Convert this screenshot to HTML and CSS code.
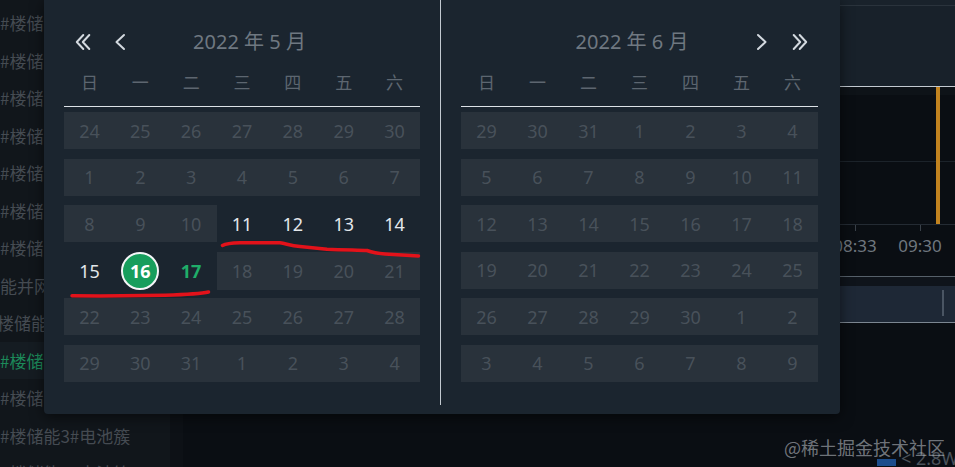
FILE: index.html
```html
<!DOCTYPE html>
<html lang="zh-CN">
<head>
<meta charset="utf-8">
<title>日期范围选择</title>
<link rel="stylesheet" href="styles.css">
</head>
<body>
<div class="app">
  <aside class="sidebar">
    <ul class="list">
      <li class="item">#楼储能1#电池簇</li>
      <li class="item">#楼储能1#PCS</li>
      <li class="item">#楼储能1#电表</li>
      <li class="item">#楼储能2#电池簇</li>
      <li class="item">#楼储能2#PCS</li>
      <li class="item">#楼储能2#电表</li>
      <li class="item">#楼储能并网柜</li>
      <li class="item">能并网柜</li>
      <li class="item shift">楼储能总表</li>
      <li class="item active">#楼储能3#PCS</li>
      <li class="item">#楼储能3#电表</li>
      <li class="item">#楼储能3#电池簇</li>
      <li class="item">#楼储能4#电池簇</li>
    </ul>
  </aside>
  <div class="gutter"></div>
  <main class="main">
    <div class="chart">
      <div class="chart-top"></div>
      <div class="chart-head"></div>
      <div class="plot">
        <div class="grid-line"></div>
        <div class="series"></div>
      </div>
      <div class="axis">
        <span class="tick">00:00</span>
        <span class="tick">00:57</span>
        <span class="tick">01:54</span>
        <span class="tick">02:51</span>
        <span class="tick">03:48</span>
        <span class="tick">04:45</span>
        <span class="tick">05:42</span>
        <span class="tick">06:39</span>
        <span class="tick">07:36</span>
        <span class="tick">08:33</span>
        <span class="tick">09:30</span>
        <span class="tick">10:27</span>
      </div>
      <div class="zoom">
        <div class="zoom-bar"><span class="handle"></span></div>
      </div>
    </div>
    <div class="legend"><span class="swatch"></span><span class="legend-text">&lt; 2.8W</span></div>
  </main>
</div>

<div class="picker">
  <section class="cal">
    <header class="cal-head">
      <div class="nav">
        <span class="nav-btn"><svg viewBox="0 0 24 24"><path d="M12.3 5 L5.8 12 L12.3 19 M18.3 5 L11.8 12 L18.3 19"/></svg></span>
        <span class="nav-btn"><svg viewBox="0 0 24 24"><path d="M16 5 L8.5 12 L16 19"/></svg></span>
      </div>
      <div class="title">2022 年 5 月</div>
      <div class="spacer"></div>
    </header>
    <div class="weekdays"><span>日</span><span>一</span><span>二</span><span>三</span><span>四</span><span>五</span><span>六</span></div>
    <div class="days">
      <div class="week"><span class="d off">24</span><span class="d off">25</span><span class="d off">26</span><span class="d off">27</span><span class="d off">28</span><span class="d off">29</span><span class="d off">30</span></div>
      <div class="week"><span class="d off">1</span><span class="d off">2</span><span class="d off">3</span><span class="d off">4</span><span class="d off">5</span><span class="d off">6</span><span class="d off">7</span></div>
      <div class="week"><span class="d off">8</span><span class="d off">9</span><span class="d off">10</span><span class="d">11</span><span class="d">12</span><span class="d">13</span><span class="d">14</span></div>
      <div class="week"><span class="d">15</span><span class="d"><span class="sel">16</span></span><span class="d today">17</span><span class="d off">18</span><span class="d off">19</span><span class="d off">20</span><span class="d off">21</span></div>
      <div class="week"><span class="d off">22</span><span class="d off">23</span><span class="d off">24</span><span class="d off">25</span><span class="d off">26</span><span class="d off">27</span><span class="d off">28</span></div>
      <div class="week"><span class="d off">29</span><span class="d off">30</span><span class="d off">31</span><span class="d off">1</span><span class="d off">2</span><span class="d off">3</span><span class="d off">4</span></div>
    </div>
  </section>
  <div class="divider"></div>
  <section class="cal cal-right">
    <header class="cal-head">
      <div class="spacer"></div>
      <div class="title">2022 年 6 月</div>
      <div class="nav nav-right">
        <span class="nav-btn"><svg viewBox="0 0 24 24"><path d="M8 5 L15.5 12 L8 19"/></svg></span>
        <span class="nav-btn"><svg viewBox="0 0 24 24"><path d="M5.7 5 L12.2 12 L5.7 19 M11.7 5 L18.2 12 L11.7 19"/></svg></span>
      </div>
    </header>
    <div class="weekdays"><span>日</span><span>一</span><span>二</span><span>三</span><span>四</span><span>五</span><span>六</span></div>
    <div class="days">
      <div class="week"><span class="d off">29</span><span class="d off">30</span><span class="d off">31</span><span class="d off">1</span><span class="d off">2</span><span class="d off">3</span><span class="d off">4</span></div>
      <div class="week"><span class="d off">5</span><span class="d off">6</span><span class="d off">7</span><span class="d off">8</span><span class="d off">9</span><span class="d off">10</span><span class="d off">11</span></div>
      <div class="week"><span class="d off">12</span><span class="d off">13</span><span class="d off">14</span><span class="d off">15</span><span class="d off">16</span><span class="d off">17</span><span class="d off">18</span></div>
      <div class="week"><span class="d off">19</span><span class="d off">20</span><span class="d off">21</span><span class="d off">22</span><span class="d off">23</span><span class="d off">24</span><span class="d off">25</span></div>
      <div class="week"><span class="d off">26</span><span class="d off">27</span><span class="d off">28</span><span class="d off">29</span><span class="d off">30</span><span class="d off">1</span><span class="d off">2</span></div>
      <div class="week"><span class="d off">3</span><span class="d off">4</span><span class="d off">5</span><span class="d off">6</span><span class="d off">7</span><span class="d off">8</span><span class="d off">9</span></div>
    </div>
  </section>
</div>

<svg class="marks" viewBox="0 0 955 467" width="955" height="467">
  <path d="M222.5 245.5 C226 243.5 232 243 240 242.8 L280 242.8 C286 243.5 290 245.8 300 246.6 L327 249.2 C345 250 360 250 367 250.5 C371 252 375 253.3 385 254 L418.5 256"/>
  <path d="M72 295.8 L100 296 L165 295.2 C185 294.6 200 294 208.5 292"/>
</svg>

<div class="watermark">@稀土掘金技术社区</div>
</body>
</html>
```

FILE: styles.css
```css
html, body {
  margin: 0;
  padding: 0;
}

body {
  width: 955px;
  height: 467px;
  overflow: hidden;
  position: relative;
  background: #0a0e13;
  font-family: "Noto Sans", "Noto Sans CJK SC", sans-serif;
}

.app {
  display: flex;
  height: 467px;
}

/* sidebar list */
.sidebar {
  width: 170px;
  flex: none;
  background: #11161b;
  overflow: hidden;
}

.list {
  list-style: none;
  margin: 0;
  padding: 4px 0 0;
}

.item {
  height: 37.5px;
  line-height: 37.5px;
  font-size: 17px;
  color: #454b52;
  white-space: nowrap;
  font-family: "Noto Sans CJK SC", sans-serif;
}

.item.shift {
  text-indent: -3px;
}

.item.active {
  background: #151c22;
  color: #1c8a5a;
}

.gutter {
  width: 13px;
  flex: none;
  background: #0d1116;
}

.main {
  flex: 1;
  min-width: 0;
  display: flex;
  flex-direction: column;
  overflow: hidden;
}

/* chart */
.chart-top {
  height: 5px;
  background: #19222b;
  border-bottom: 1px solid #2a333c;
}

.chart-head {
  height: 80px;
  background: #18212a;
  border-bottom: 1px solid #c3cad1;
}

.plot {
  height: 138px;
  box-sizing: border-box;
  padding-top: 74px;
  position: relative;
  border-bottom: 1px solid #242b33;
  background: #0a0e13;
}

.plot::before {
  content: "";
  display: block;
  position: absolute;
  left: 0;
  right: 0;
  top: 0;
  height: 8px;
  background: #0e1318;
}

.grid-line {
  height: 1px;
  background: #1c232a;
}

.series {
  position: absolute;
  left: 753px;
  top: 0;
  bottom: 0;
  width: 4px;
  background: #c2831f;
}

.axis {
  height: 51px;
  display: flex;
  padding-left: 54.5px;
}

.tick {
  width: 65px;
  flex: none;
  position: relative;
  text-align: center;
  font-size: 17px;
  line-height: 20px;
  padding-top: 11px;
  color: #6f777f;
}

.tick::before {
  content: "";
  position: absolute;
  left: 32px;
  top: 0;
  width: 1px;
  height: 6px;
  background: #3a4149;
}

.zoom {
  border-top: 1px solid #56606a;
  padding-top: 9px;
  background: #0f141b;
}

.zoom-bar {
  height: 36px;
  background: #1e2836;
  border-bottom: 1px solid #7c8691;
  position: relative;
}

.handle {
  position: absolute;
  left: 759px;
  top: 4px;
  width: 2px;
  height: 26px;
  background: #4a5563;
}

.legend {
  display: flex;
  align-items: flex-start;
  padding-left: 694px;
  margin-top: 125px;
}

.swatch {
  width: 19px;
  height: 7px;
  margin-top: 11px;
  background: #1c4d8c;
  flex: none;
}

.legend-text {
  margin-left: 5px;
  font-size: 18px;
  line-height: 20px;
  color: #4a525a;
  white-space: nowrap;
}

/* date picker popup */
.picker {
  position: absolute;
  left: 44px;
  top: 0;
  width: 796px;
  height: 414px;
  box-sizing: border-box;
  padding: 0 22px 0 20px;
  display: flex;
  background: #1b252f;
  border-radius: 0 0 4px 4px;
  box-shadow: 0 3px 14px rgba(0, 0, 0, 0.55);
}

.cal {
  width: 356px;
  flex: none;
  padding-top: 30px;
}

.cal-right {
  width: 357px;
}

.divider {
  width: 1px;
  flex: none;
  margin: 0 20px 9px;
  background: #c2c9d0;
}

.cal-head {
  display: flex;
  align-items: center;
  height: 24px;
}

.nav {
  width: 70px;
  flex: none;
  display: flex;
  gap: 13px;
  padding-left: 7px;
  box-sizing: border-box;
}

.nav-right {
  gap: 14px;
  padding-left: 1.5px;
}

.nav-btn {
  display: block;
  width: 24px;
  height: 24px;
}

.nav-btn svg {
  display: block;
  width: 24px;
  height: 24px;
  fill: none;
  stroke: #d3d9df;
  stroke-width: 2;
  stroke-linecap: round;
  stroke-linejoin: round;
}

.spacer {
  width: 55px;
  flex: none;
}

.title {
  flex: 1;
  text-align: center;
  font-size: 20px;
  line-height: 24px;
  color: #6f7881;
  white-space: nowrap;
}

.weekdays {
  display: grid;
  grid-template-columns: repeat(7, 1fr);
  align-items: center;
  height: 53px;
  box-sizing: border-box;
  padding-top: 2px;
  border-bottom: 1px solid #dde2e7;
  text-align: center;
  font-family: "Noto Sans CJK SC", sans-serif;
  font-size: 17px;
  color: #5d6670;
}

.days {
  display: grid;
  row-gap: 9.6px;
  margin-top: 5px;
}

.week {
  display: grid;
  grid-template-columns: repeat(7, 1fr);
  height: 37px;
}

.d {
  display: flex;
  align-items: center;
  justify-content: center;
  font-size: 18px;
  color: #e3e7eb;
}

.d.off {
  background: #29323b;
  color: #48515a;
}

.d.today {
  color: #1fae69;
  font-weight: 700;
}

.sel {
  width: 38px;
  height: 38px;
  box-sizing: border-box;
  flex: none;
  display: flex;
  align-items: center;
  justify-content: center;
  border: 2.5px solid #f4f6f8;
  border-radius: 50%;
  background: #179e5d;
  color: #ffffff;
  font-weight: 700;
}

/* annotations drawn over the screenshot */
.marks {
  position: absolute;
  left: 0;
  top: 0;
  pointer-events: none;
}

.marks path {
  fill: none;
  stroke: #e3121a;
  stroke-width: 3.5;
  stroke-linecap: round;
  stroke-linejoin: round;
}

.watermark {
  position: absolute;
  right: 10px;
  top: 436px;
  font-family: "Noto Sans CJK SC", sans-serif;
  font-size: 18px;
  line-height: 22px;
  color: rgba(200, 205, 212, 0.55);
  white-space: nowrap;
}
```
